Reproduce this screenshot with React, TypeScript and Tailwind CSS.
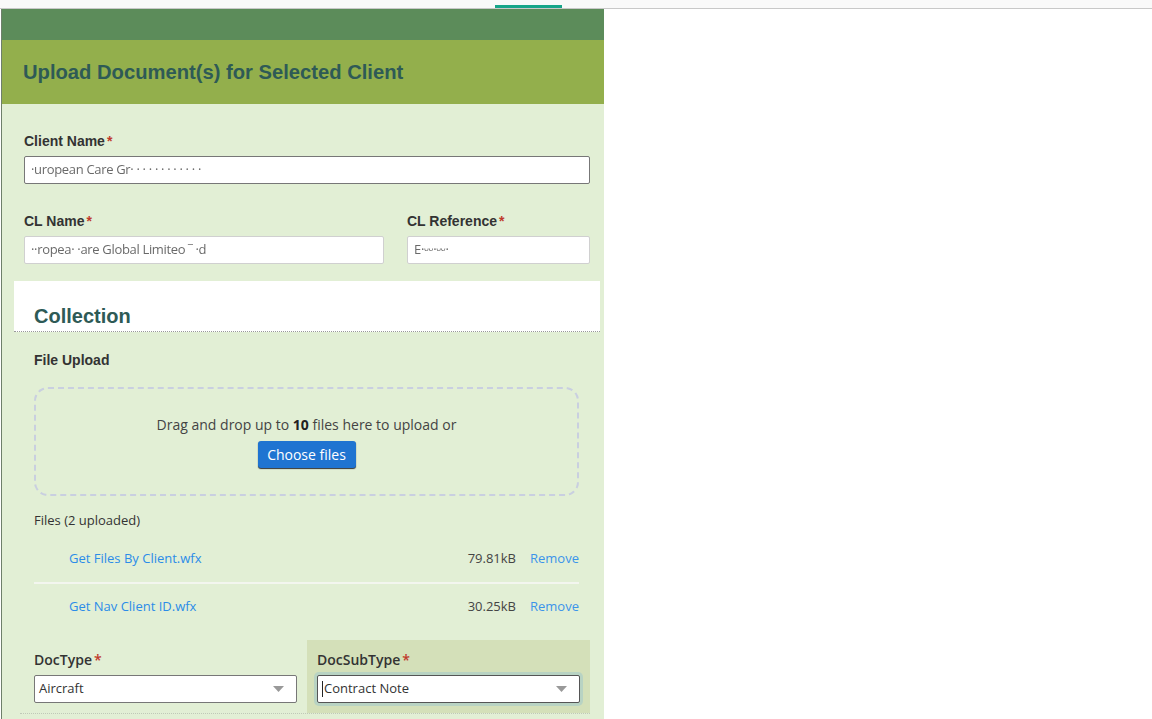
import React from "react";

const files = [
  { name: "Get Files By Client.wfx", size: "79.81kB" },
  { name: "Get Nav Client ID.wfx", size: "30.25kB" },
];

function Label({ text, sans = false }: { text: string; sans?: boolean }) {
  return (
    <div
      className={`h-5 text-[14px] leading-5 font-bold text-[#333] ${
        sans ? "font-['Open_Sans',sans-serif] font-semibold" : "font-['Liberation_Sans',Arial,sans-serif]"
      }`}
    >
      {text}
      <span className="text-[#c0392b] ml-[2px]">*</span>
    </div>
  );
}

function Redacted({ text }: { text: string }) {
  return (
    <span className="text-[13px] text-[#444] blur-[0.6px] opacity-80 tracking-tight font-['Open_Sans',sans-serif]">
      {text}
    </span>
  );
}

function Select({ value, focused = false }: { value: string; focused?: boolean }) {
  return (
    <div
      className={`h-[28px] bg-white rounded-[2px] border flex items-center justify-between pl-[4px] pr-[12px] ${
        focused ? "border-[#555] shadow-[0_0_0_3px_#b8d3c3]" : "border-[#777]"
      }`}
    >
      <span className="flex items-center text-[13px] text-[#333] font-['Open_Sans',sans-serif]">
        {focused && <span className="w-px h-[16px] bg-[#222] mr-[1px]" />}
        {value}
      </span>
      <svg width="11" height="6" viewBox="0 0 11 6">
        <path d="M0 0 L11 0 L5.5 6 Z" fill="#999" />
      </svg>
    </div>
  );
}

export default function App() {
  return (
    <div className="w-[1152px] h-[719px] overflow-hidden bg-white relative">
      <div className="h-[9px] bg-[#f9f9f9] border-b border-[#c8c8c8] relative">
        <div className="absolute left-[495px] top-[5px] w-[67px] h-[3px] bg-[#17a589]" />
      </div>
      <div className="ml-px w-[603px] border-l border-[#6e7f6a]">
        <div className="h-[31px] bg-[#5c8c5a]" />
        <div className="h-[64px] bg-[#93af4c] flex items-center pl-[21px]">
          <h1 className="text-[20.2px] font-bold text-[#2e5a56] font-['Liberation_Sans',Arial,sans-serif]">
            Upload Document(s) for Selected Client
          </h1>
        </div>
        <div className="bg-[#e2efd5] pl-[22px] pr-[14px] pt-[27px] pb-[10px]">
          <Label text="Client Name" />
          <div className="mt-[5px] h-[28px] bg-white border border-[#777] rounded-[2px] flex items-center px-[6px]">
            <Redacted text="·uropean Care Gr· ·  ·   ·  ·  ·  · ·   ·  ·  ·  ·" />
          </div>

          <div className="mt-[27px] flex gap-[23px]">
            <div className="w-[360px]">
              <Label text="CL Name" />
              <div className="mt-[5px] h-[28px] bg-white border border-[#d0d0d0] rounded-[2px] flex items-center px-[6px]">
                <Redacted text="··ropea· ·are Global Limiteo  ‾ ·d" />
              </div>
            </div>
            <div className="flex-1">
              <Label text="CL Reference" />
              <div className="mt-[5px] h-[28px] bg-white border border-[#d0d0d0] rounded-[2px] flex items-center px-[6px]">
                <Redacted text="E·ᵕᵕ·ᵕᵕ·" />
              </div>
            </div>
          </div>

          <div className="mt-[17px] -ml-[10px] -mr-[10px] h-[51px] bg-white border-b border-dotted border-[#999] flex items-end pl-[20px] pb-0">
            <h2 className="text-[20px] font-bold text-[#2e5a56] font-['Liberation_Sans',Arial,sans-serif]">
              Collection
            </h2>
          </div>

          <div className="pl-[10px] pr-[11px]">
            <div className="mt-[18px] h-5 text-[14px] leading-5 font-bold text-[#333] font-['Liberation_Sans',Arial,sans-serif]">
              File Upload
            </div>
            <div className="mt-[17px] h-[109px] border-2 border-dashed border-[#c9cfe0] rounded-[14px] flex flex-col items-center pt-[26px] font-['Open_Sans',sans-serif]">
              <p className="text-[14px] leading-5 text-[#444]">
                Drag and drop up to <b className="text-[#222]">10</b> files here to upload or
              </p>
              <button className="mt-[6px] w-[98px] h-[27px] bg-[#1f74d1] text-white text-[14px] leading-[27px] rounded-[3px] shadow-[0_1px_1px_#333]">
                Choose files
              </button>
            </div>

            <div className="mt-[14px] text-[13px] leading-5 text-[#333] font-['Open_Sans',sans-serif]">
              Files (2 uploaded)
            </div>
            <div className="mt-[6px] font-['Open_Sans',sans-serif] text-[13px]">
              {files.map((f, i) => (
                <div key={f.name}>
                  {i > 0 && <div className="h-[2px] bg-[#f3f6ef]" />}
                  <div className="h-[46px] flex items-center pl-[35px]">
                    <span className="text-[#2b8ce8] flex-1">{f.name}</span>
                    <span className="text-[#444] mr-[14px]">{f.size}</span>
                    <span className="text-[#3b94ea]">Remove</span>
                  </div>
                </div>
              ))}
            </div>
          </div>

          <div className="mt-[10px] flex border-b border-dotted border-[#c0c8b8] -ml-[4px] pl-[4px]">
            <div className="w-[283px] px-[10px] pt-[10px] pb-[10px]">
              <Label text="DocType" sans />
              <div className="mt-[5px]">
                <Select value="Aircraft" />
              </div>
            </div>
            <div className="w-[283px] px-[10px] pt-[10px] pb-[10px] bg-[#d4e0b9]">
              <Label text="DocSubType" sans />
              <div className="mt-[5px]">
                <Select value="Contract Note" focused />
              </div>
            </div>
          </div>
        </div>
      </div>
    </div>
  );
}
